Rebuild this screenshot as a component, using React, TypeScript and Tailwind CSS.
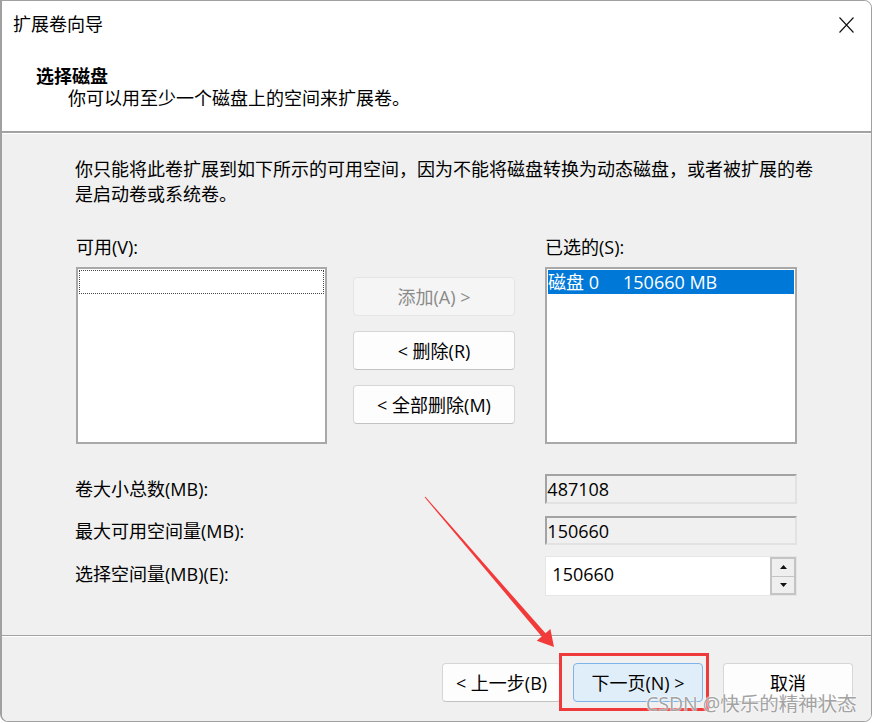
import React from "react";

type BtnProps = {
  label: string;
  className?: string;
  disabled?: boolean;
  primary?: boolean;
};

const Btn = ({ label, className = "", disabled, primary }: BtnProps) => (
  <button
    type="button"
    className={
      "flex h-[39px] items-center justify-center rounded-[4px] border text-[18px] leading-none " +
      (disabled
        ? "border-[#e5e5e5] bg-[#f5f5f5] text-[#8a8a8a] "
        : primary
          ? "border-[#7eb4ea] bg-[#e0eef9] text-black "
          : "border-[#d6d6d6] border-b-[#c2c2c2] bg-[#fdfdfd] text-black ") +
      className
    }
  >
    {label}
  </button>
);

const ReadOnlyField = ({ value, h }: { value: string; h: string }) => (
  <div
    className={
      "flex w-[252px] items-center border-2 border-t-[#a3a3a3] border-l-[#a3a3a3] border-r-[#e2e2e2] border-b-[#e2e2e2] bg-[#f0f0f0] text-[18px] leading-none text-black " +
      h
    }
  >
    {value}
  </div>
);

export default function App() {
  return (
    <div className="relative h-[723px] w-[873px] overflow-hidden bg-white font-['Open_Sans','Noto_Sans_CJK_SC',sans-serif] text-black">
      {/* window */}
      <div className="flex h-[722px] w-[872px] flex-col overflow-hidden rounded-tr-[8px] rounded-b-[8px] border border-l-2 border-[#a0a0a0]">
        {/* header */}
        <div className="h-[132px] shrink-0 border-b-2 border-[#a3a3a3] bg-white">
          <div className="flex h-[46px] items-center justify-between pl-[11px] pr-[17px]">
            <span className="text-[18px] leading-[22px]">扩展卷向导</span>
            <svg width="15" height="16" viewBox="0 0 15 16" className="mt-[1px]">
              <path d="M0.5 0.5 L14.5 15.5 M14.5 0.5 L0.5 15.5" stroke="#111" strokeWidth="1.1" fill="none" />
            </svg>
          </div>
          <div className="mt-[18px] pl-[34px] text-[18px] font-bold leading-[22px]">选择磁盘</div>
          <div className="pl-[66px] text-[18px] leading-[22px]">你可以用至少一个磁盘上的空间来扩展卷。</div>
        </div>

        {/* body */}
        <div className="flex-1 border-t border-white bg-[#f0f0f0] pl-[73px] pt-[23px]">
          <p className="w-[745px] text-[18px] leading-[25px]">
            你只能将此卷扩展到如下所示的可用空间，因为不能将磁盘转换为动态磁盘，或者被扩展的卷是启动卷或系统卷。
          </p>

          <div className="ml-px mt-[29px] flex">
            <div className="flex w-[251px] flex-col">
              <span className="text-[18px] leading-[22px]">可用(V):</span>
              <div className="mt-[9px] h-[177px] border-2 border-[#a8a8a8] bg-white p-px">
                <div className="h-[24px] border border-dotted border-[#444]" />
              </div>
            </div>

            <div className="ml-[26px] flex w-[162px] flex-col gap-[15px] pt-[41px]">
              <Btn label="添加(A) >" disabled className="w-full" />
              <Btn label="< 删除(R)" className="w-full" />
              <Btn label="< 全部删除(M)" className="w-full" />
            </div>

            <div className="ml-[30px] flex w-[252px] flex-col">
              <span className="text-[18px] leading-[22px]">已选的(S):</span>
              <div className="mt-[9px] h-[177px] border-2 border-[#a8a8a8] bg-white p-px">
                <div className="flex h-[24px] items-center bg-[#0078d7] text-[18px] leading-none text-white">
                  <span className="w-[75px]">磁盘 0</span>
                  <span>150660 MB</span>
                </div>
              </div>
            </div>
          </div>

          <div className="mt-[30px] flex flex-col gap-[11px] pr-[74px]">
            <div className="flex items-center">
              <span className="w-[471px] text-[18px] leading-[22px]">卷大小总数(MB):</span>
              <ReadOnlyField value="487108" h="h-[30px]" />
            </div>
            <div className="mt-px flex items-center">
              <span className="w-[471px] text-[18px] leading-[22px]">最大可用空间量(MB):</span>
              <ReadOnlyField value="150660" h="h-[29px]" />
            </div>
            <div className="flex items-center">
              <span className="w-[471px] pb-[5px] text-[18px] leading-[22px]">选择空间量(MB)(E):</span>
              <div className="flex h-[40px] w-[252px] border border-[#e6e6e6] bg-white">
                <div className="flex flex-1 items-center pb-[4px] pl-[6px] text-[18px] leading-none">150660</div>
                <div className="flex w-[26px] flex-col border-2 border-[#c4c4c4]">
                  <div className="flex flex-1 items-center justify-center border-b border-[#c4c4c4] bg-[#efefef]">
                    <svg width="7" height="4" viewBox="0 0 7 4">
                      <path d="M0 4 L3.5 0 L7 4 Z" fill="#111" />
                    </svg>
                  </div>
                  <div className="flex flex-1 items-center justify-center bg-[#efefef]">
                    <svg width="7" height="4" viewBox="0 0 7 4">
                      <path d="M0 0 L7 0 L3.5 4 Z" fill="#111" />
                    </svg>
                  </div>
                </div>
              </div>
            </div>
          </div>
        </div>

        {/* footer */}
        <div className="h-[86px] shrink-0 border-t border-[#a3a3a3] bg-[#f0f0f0] shadow-[inset_0_1px_0_#ffffff]">
          <div className="flex justify-end pr-[18px] pt-[27px]">
            <Btn label="< 上一步(B)" className="w-[119px]" />
            <Btn label="下一页(N) >" primary className="ml-[12px] w-[130px]" />
            <Btn label="取消" className="ml-[20px] w-[130px]" />
          </div>
        </div>
      </div>

      {/* annotations */}
      <div className="pointer-events-none absolute left-[559px] top-[653px] h-[58px] w-[150px] border-[3px] border-[#ee3a3a]" />
      <svg className="pointer-events-none absolute left-0 top-0" width="873" height="723" viewBox="0 0 873 723">
        <polygon
          points="424.6,497.3 541.7,636.5 536.8,640.8 554,647 550.4,629 545.5,633.3 425.4,496.7"
          fill="#f23a3a"
        />
      </svg>
      <span className="pointer-events-none absolute left-[646px] top-[692px] text-[19.5px] leading-[24px] text-[#a3a3a3] [text-shadow:0_0_2px_#fff,0_0_2px_#fff]">
        CSDN @快乐的精神状态
      </span>
    </div>
  );
}
